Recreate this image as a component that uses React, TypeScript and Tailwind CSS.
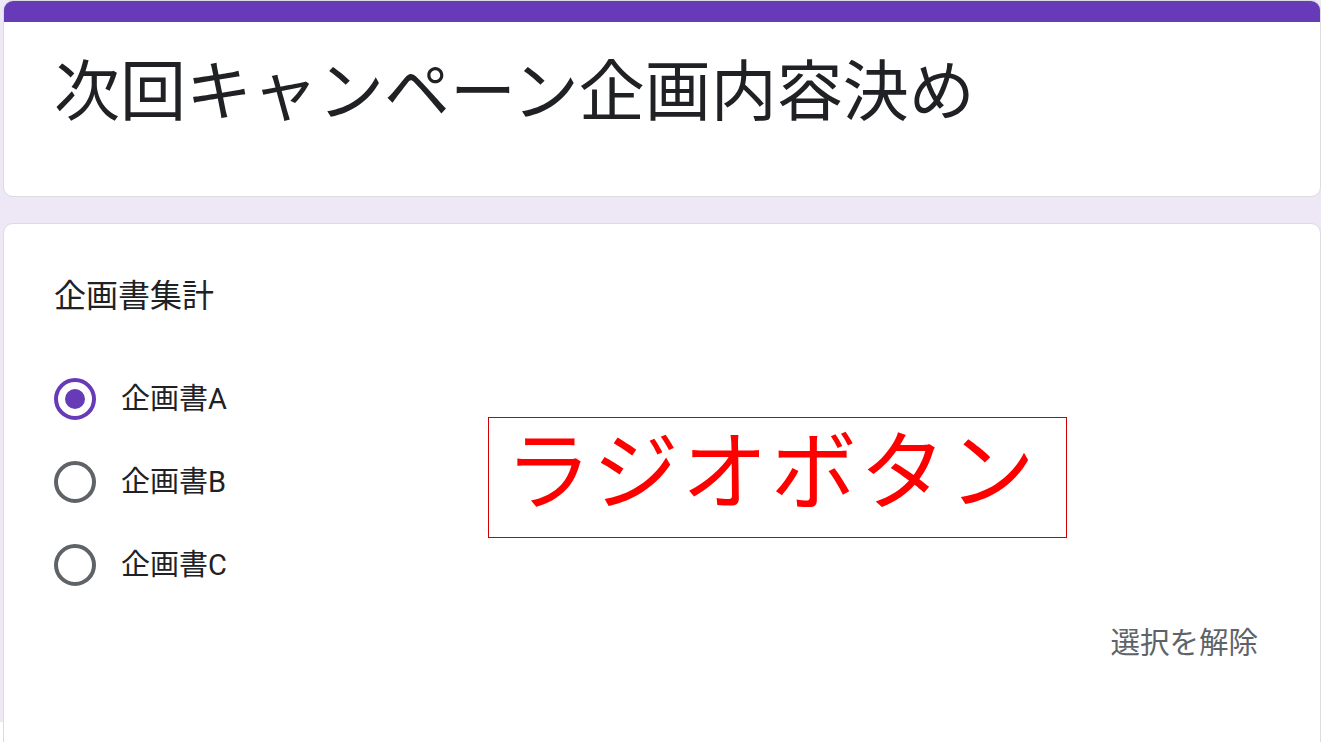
const jp = "font-['Roboto','Noto_Sans_CJK_JP',sans-serif]";

const options = ['企画書A', '企画書B', '企画書C'];

function Radio({ checked }: { checked: boolean }) {
  if (checked) {
    return (
      <span className="flex h-[42px] w-[42px] shrink-0 items-center justify-center rounded-full border-[4px] border-[#673ab7]">
        <span className="h-[20px] w-[20px] rounded-full bg-[#673ab7]"></span>
      </span>
    );
  }
  return <span className="h-[42px] w-[42px] shrink-0 rounded-full border-[4px] border-[#5f6368]"></span>;
}

export default function App() {
  return (
    <div className={`relative h-[742px] w-[1321px] overflow-hidden bg-white ${jp}`}>
      <div className="flex h-[722px] flex-col gap-[26px] bg-[#ede7f6] pl-[3px]">
        <div className="h-[197px] w-[1318px] shrink-0 overflow-hidden rounded-[10px] border border-[#dadce0] bg-white">
          <div className="h-[21px] bg-[#673ab7]"></div>
          <h1 className="pl-[50px] pt-[31px] text-[66px] leading-[80px] font-normal text-[#202124]">
            次回キャンペーン企画内容決め
          </h1>
        </div>

        <div className="h-[560px] w-[1318px] shrink-0 rounded-[10px] border border-[#dadce0] bg-white pl-[50px] pr-[62px] pt-[49px]">
          <div className="text-[32px] leading-[46px] text-[#202124]">企画書集計</div>
          <div className="mt-[38px] flex flex-col">
            {options.map((label, i) => (
              <label key={label} className="flex h-[83px] items-center gap-[25px]">
                <Radio checked={i === 0} />
                <span className="text-[29px] leading-[40px] text-[#202124]">{label}</span>
              </label>
            ))}
          </div>
          <div className="mt-[15px] flex justify-end">
            <span className="text-[29.5px] leading-[44px] text-[#5f6368]">選択を解除</span>
          </div>
        </div>
      </div>

      <div className="absolute left-[488px] top-[417px] flex h-[121px] w-[579px] items-center justify-center border border-[#d00000] bg-white pb-[8px] pr-[12px]">
        <span className="text-[86px] leading-none tracking-[3px] text-[#ff0000]">ラジオボタン</span>
      </div>
    </div>
  );
}
